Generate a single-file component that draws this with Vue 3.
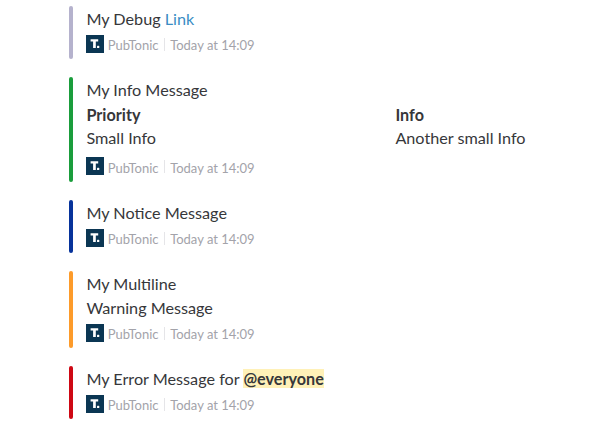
<script setup>
const messages = [
  { tone: 'debug', lines: ['My Debug '], link: 'Link' },
  {
    tone: 'info',
    lines: ['My Info Message'],
    fields: [
      { title: 'Priority', value: 'Small Info' },
      { title: 'Info', value: 'Another small Info' },
    ],
  },
  { tone: 'notice', lines: ['My Notice Message'] },
  { tone: 'warning', lines: ['My Multiline', 'Warning Message'] },
  { tone: 'error', lines: ['My Error Message for '], mention: '@everyone' },
]
</script>

<template>
  <main class="feed">
    <article v-for="m in messages" :key="m.tone" class="message">
      <div class="bar" :class="m.tone"></div>
      <div class="body">
        <div v-for="line in m.lines" :key="line" class="line">{{ line }}<a v-if="m.link" class="link">{{ m.link }}</a><b v-if="m.mention" class="mention">{{ m.mention }}</b></div>
        <div v-if="m.fields" class="fields">
          <div v-for="f in m.fields" :key="f.title">
            <div class="line title">{{ f.title }}</div>
            <div class="line">{{ f.value }}</div>
          </div>
        </div>
        <footer class="footer">
          <svg class="logo" viewBox="0 0 18 18">
            <rect width="18" height="18" fill="#0b3653" />
            <path d="M4.6 4.2h7.6v2.3H9.8V13H7.1V6.5H4.6z" fill="#fff" />
            <rect x="11" y="10.8" width="2.3" height="2.3" rx=".6" fill="#fff" />
          </svg>
          <span class="app">PubTonic</span>
          <span class="divider"></span>
          <span class="time">Today at 14:09</span>
        </footer>
      </div>
    </article>
  </main>
</template>

<style>
body {
  margin: 0;
  background: #fff;
}
</style>

<style scoped>
.feed {
  box-sizing: border-box;
  height: 439px;
  padding: 6px 0 0 69px;
  display: flex;
  flex-direction: column;
  gap: 18px;
  font-family: Lato, sans-serif;
  font-size: 16.2px;
  color: #36373a;
}
.message {
  display: flex;
  gap: 13.4px;
}
.bar {
  width: 4.4px;
  margin-right: -0.4px;
  border-radius: 3px;
}
.debug { background: #b5b2cd; }
.info { background: #1a9d3c; }
.notice { background: #07339b; }
.warning { background: #fd9b2a; }
.error { background: #ce0814; }
.body {
  flex: 1;
  padding-top: 1px;
}
.line {
  line-height: 24px;
  white-space: pre;
}
.fields {
  display: grid;
  grid-template-columns: 309px 1fr;
  padding: 1px 0 3px;
}
.fields .title + .line {
  margin-top: -1px;
}
.title,
.mention {
  font-weight: 700;
}
.link { color: #3a8dc4; }
.mention { background: #fff1b8; }
.footer {
  display: flex;
  align-items: flex-start;
  height: 28px;
  padding-top: 4px;
  box-sizing: border-box;
  font-size: 13px;
  line-height: 18px;
  color: #a3a3aa;
}
.fields + .footer {
  height: 29px;
}
.fields + .footer .app,
.fields + .footer .time {
  padding-top: 2px;
}
.logo {
  width: 18px;
  height: 18px;
  margin-right: 3.4px;
}
.app,
.time {
  padding-top: 1px;
}
.divider {
  width: 1px;
  height: 13px;
  margin: 3px 5.6px 0 5px;
  background: #e5e5e8;
}
</style>
